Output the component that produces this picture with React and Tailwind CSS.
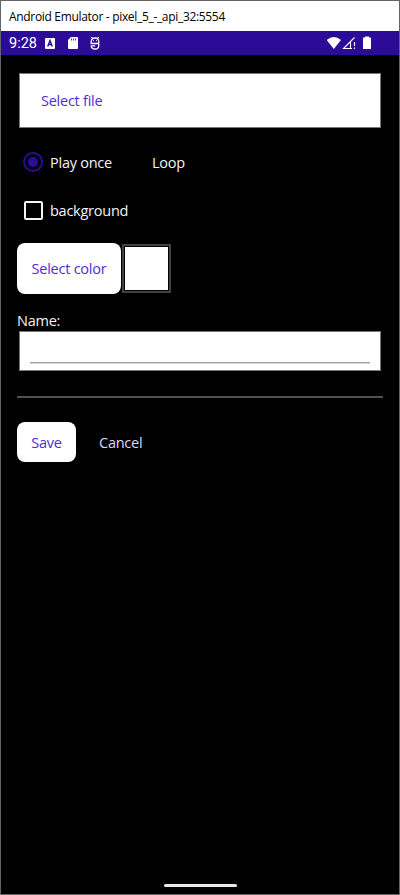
function TitleBar() {
  return (
    <div className="flex h-[30px] shrink-0 items-center bg-white pl-2 pt-[1px] text-[12px] tracking-[-0.32px] text-black">
      <span className="whitespace-pre">Android Emulator - pixel_5_-_api_32:5554</span>
    </div>
  );
}

function StatusBar() {
  return (
    <div className="flex h-6 shrink-0 items-center bg-[#2b0b98] pl-2 text-white">
      <span className="w-[35px] pt-0.5 font-['Roboto',sans-serif] text-[14.5px] leading-6 tracking-normal">9:28</span>
      <svg className="h-6 w-16" viewBox="0 0 64 24" fill="none">
        <rect x="1" y="7" width="10" height="11" rx="1" fill="#fff" />
        <path d="M3.7 15.5 6 9.5l2.3 6M4.5 13.5h3" stroke="#2b0b98" strokeWidth="1.4" />
        <path d="M27 6h6q1 0 1 1v10q0 1-1 1h-8q-1 0-1-1V9z" fill="#fff" />
        <path d="M27.5 7.5v2M29.5 7.5v2M31.5 7.5v2" stroke="#2b0b98" strokeWidth=".8" />
        <path d="M47.5 6 48.5 8M54.5 6 53.5 8M47.2 12v-1.5a3.8 3.5 0 0 1 7.6 0V12M46.5 12.5H55M47.2 14.5q0 3.5 3.8 3.5t3.8-3.5v-2M47.2 14.8h4" stroke="#fff" strokeWidth="1.3" />
        <path d="M49 9.7h1M52 9.7h1" stroke="#fff" />
      </svg>
      <div className="flex-1" />
      <svg className="mr-[25px] h-6 w-12" viewBox="0 0 48 24" fill="none">
        <path d="M.7 9Q7.8 3 15 9L7.8 18z" fill="#fff" />
        <path d="M28.5 6.5 17.5 17.5H26M24.5 11v6.5" stroke="#fff" strokeWidth="1.1" />
        <path d="M28.5 11v4M28.5 16.5V18" stroke="#fff" strokeWidth="1.2" />
        <path d="M37.5 6.5H39v-1h4v1h1.5q.5 0 .5.5v10.5q0 .5-.5.5h-7q-.5 0-.5-.5V7q0-.5.5-.5z" fill="#fff" />
      </svg>
    </div>
  );
}

export default function App() {
  return (
    <div className="flex h-[895px] w-[400px] flex-col border border-[#656565] border-l-[#60666b] bg-black font-['Open_Sans','Noto_Sans',sans-serif] text-[14.5px] leading-5 tracking-[-0.25px] text-[#f4f4f4]">
      <TitleBar />
      <StatusBar />
      <main className="flex flex-1 flex-col px-4 pt-[18px]">
        <button className="mx-[2px] flex h-[55px] items-center border border-[#777] bg-white pl-[21px] tracking-[-0.25px] text-[#512bd4]">
          Select file
        </button>

        <div className="mt-6 flex h-5 items-center pl-1.5">
          <span className="flex size-5 items-center justify-center rounded-full border-2 border-[#2b0b98]">
            <span className="size-2.5 rounded-full bg-[#2b0b98]" />
          </span>
          <span className="ml-[7px] w-[102px] pt-[1px]">Play once</span>
          <span className="pt-[1px]">Loop</span>
        </div>

        <div className="mt-7 flex h-5 items-center pl-[7px]">
          <span className="size-[19px] rounded-[2px] border-2 border-[#f4f4f4]" />
          <span className="ml-[7px] pt-[1px]">background</span>
        </div>

        <div className="mt-[23px] flex h-[51px] items-center">
          <button className="h-[51px] w-[104px] rounded-lg bg-white pt-[1px] tracking-[-0.25px] text-[#512bd4]">Select color</button>
          <span className="ml-[1px] size-[49px] border-2 border-[#414141] bg-black p-[1px]">
            <span className="block size-full bg-white" />
          </span>
        </div>

        <label className="mt-4 h-[21px] pt-[1px]">Name:</label>
        <div className="mx-[2px] h-10 border border-[#777] bg-white px-2.5 pt-[30px]">
          <div className="h-0.5 border-t border-b border-t-[#a0a0a0] border-b-[#d5d5d5]" />
        </div>

        <div className="mt-[25px] h-0.5 bg-[#505050]" />

        <div className="mt-6 flex h-10 items-center">
          <button className="h-10 w-[59px] rounded-lg bg-white pt-[1px] tracking-[-0.25px] text-[#512bd4]">Save</button>
          <button className="ml-[23px] pt-[1px] tracking-[-0.25px] text-[#dfd8f7]">Cancel</button>
        </div>
      </main>
      <div className="mb-[7px] h-[3px] w-[73px] self-center rounded-full bg-[#e8e8e8]" />
    </div>
  );
}
